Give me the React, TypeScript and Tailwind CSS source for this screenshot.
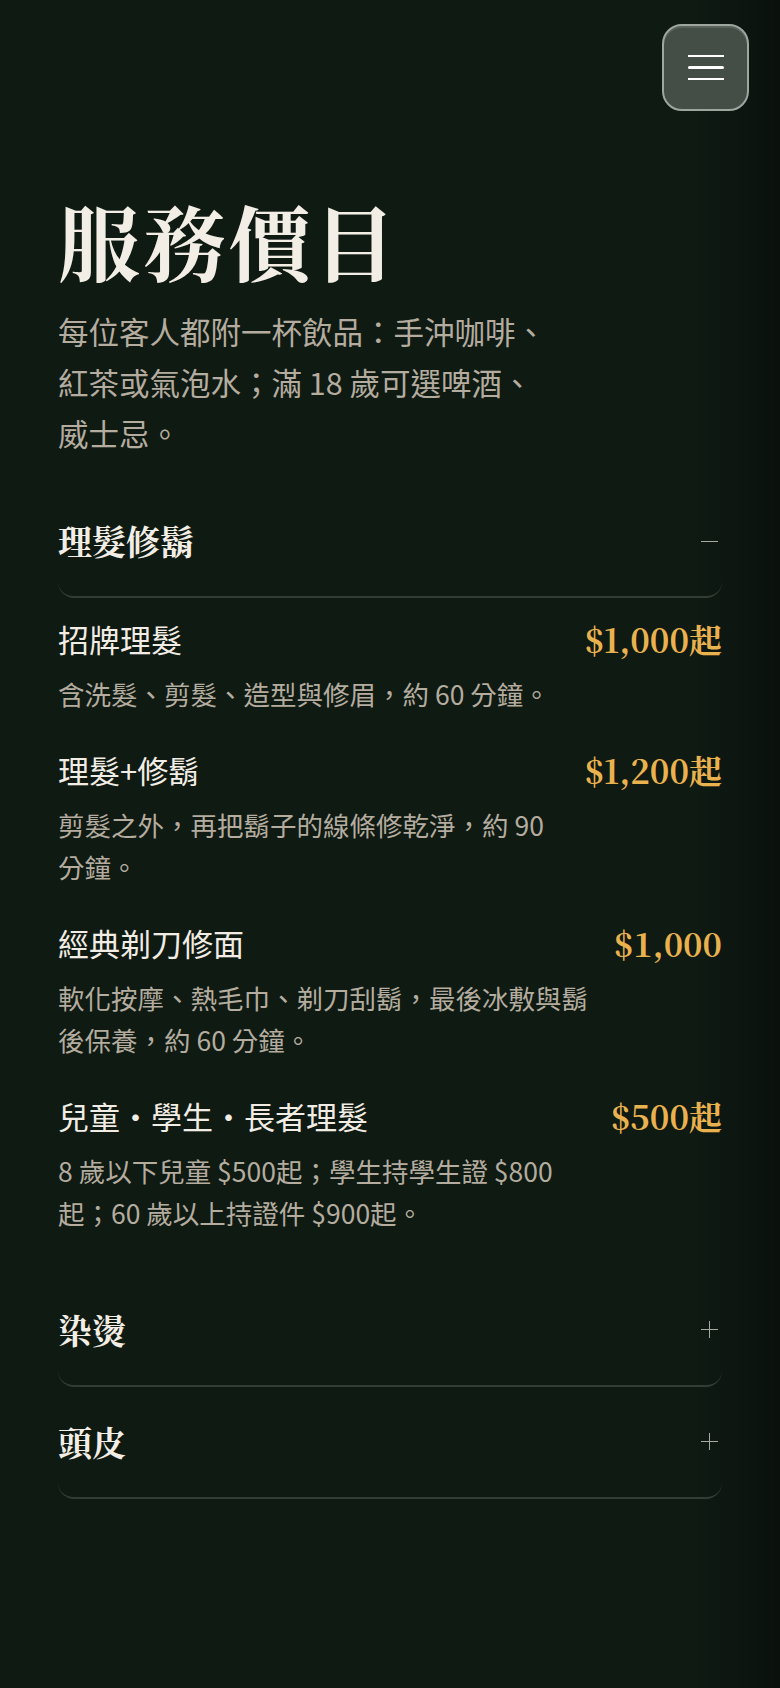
import { useState } from "react";

type Item = { name: string; price: string; desc: string };

const sans = "font-['Noto_Sans_CJK_TC','Noto_Sans',sans-serif]";
const serif = "font-['Noto_Serif_CJK_TC','Liberation_Serif','Noto_Sans_CJK_TC',serif]";

const haircut: Item[] = [
  { name: "招牌理髮", price: "$1,000起", desc: "含洗髮、剪髮、造型與修眉，約 60 分鐘。" },
  { name: "理髮+修鬍", price: "$1,200起", desc: "剪髮之外，再把鬍子的線條修乾淨，約 90 分鐘。" },
  { name: "經典剃刀修面", price: "$1,000", desc: "軟化按摩、熱毛巾、剃刀刮鬍，最後冰敷與鬍後保養，約 60 分鐘。" },
  {
    name: "兒童・學生・長者理髮",
    price: "$500起",
    desc: "8 歲以下兒童 $500起；學生持學生證 $800起；60 歲以上持證件 $900起。",
  },
];

function SectionHeader({ title, open, onClick }: { title: string; open: boolean; onClick: () => void }) {
  return (
    <button
      type="button"
      onClick={onClick}
      className="flex h-[112px] w-full items-center justify-between rounded-b-[16px] border-b-2 border-[#333d35] text-left"
    >
      <span className={`${serif} text-[34px] font-bold leading-none text-[#f3eee5]`}>{title}</span>
      <span className="relative mr-[4px] h-[17px] w-[17px]">
        <span className="absolute left-0 top-[8px] h-px w-[17px] bg-[#a6aaa3]" />
        {!open && <span className="absolute left-[8px] top-0 h-[17px] w-px bg-[#a6aaa3]" />}
      </span>
    </button>
  );
}

function PriceRow({ item }: { item: Item }) {
  return (
    <div className="flex items-start justify-between gap-5">
      <div className="flex-1">
        <h3 className={`${sans} text-[31px] leading-[42px] text-[#f2ede4]`}>{item.name}</h3>
        <p className={`${sans} mt-[13px] text-[26.5px] leading-[42.5px] text-[#b4ac9f]`}>{item.desc}</p>
      </div>
      <div className={`${serif} shrink-0 text-[33px] font-bold leading-[42px] text-[#e9b24f]`}>{item.price}</div>
    </div>
  );
}

export default function App() {
  const [open, setOpen] = useState<string>("理髮修鬍");
  const toggle = (key: string) => setOpen((cur) => (cur === key ? "" : key));

  return (
    <div className="min-h-[1688px] w-full bg-[linear-gradient(to_right,#0f1a13_0%,#0f1a13_89%,#0a110d_100%)]">
      <header className="flex justify-end pr-[31px] pt-[24px]">
        <button
          type="button"
          aria-label="menu"
          className="flex h-[87px] w-[87px] flex-col items-center justify-center gap-[9px] rounded-[20px] border-2 border-[#9fa69f] bg-[#444d46] shadow-[inset_0_2px_0_rgba(255,255,255,0.12)]"
        >
          <span className="h-[2px] w-[36px] bg-white" />
          <span className="h-[3px] w-[36px] rounded-full bg-white" />
          <span className="h-[2px] w-[36px] bg-white" />
        </button>
      </header>

      <main className="px-[58px]">
        <h1 className={`${serif} mt-[84px] text-[82px] font-bold leading-[90px] tracking-[0.04em] text-[#f3eee5]`}>
          服務價目
        </h1>
        <p className={`${sans} mt-[21px] max-w-[490px] text-[30.5px] leading-[51px] text-[#b4ac9f]`}>
          每位客人都附一杯飲品：手沖咖啡、紅茶或氣泡水；滿 18 歲可選啤酒、威士忌。
        </p>

        <section className="mt-[27px]">
          <SectionHeader title="理髮修鬍" open={open === "理髮修鬍"} onClick={() => toggle("理髮修鬍")} />
          {open === "理髮修鬍" && (
            <div className="flex flex-col gap-[33px] pb-[40px] pt-[20px]">
              {haircut.map((item) => (
                <PriceRow key={item.name} item={item} />
              ))}
            </div>
          )}
          <SectionHeader title="染燙" open={open === "染燙"} onClick={() => toggle("染燙")} />
          <SectionHeader title="頭皮" open={open === "頭皮"} onClick={() => toggle("頭皮")} />
        </section>
      </main>
    </div>
  );
}
